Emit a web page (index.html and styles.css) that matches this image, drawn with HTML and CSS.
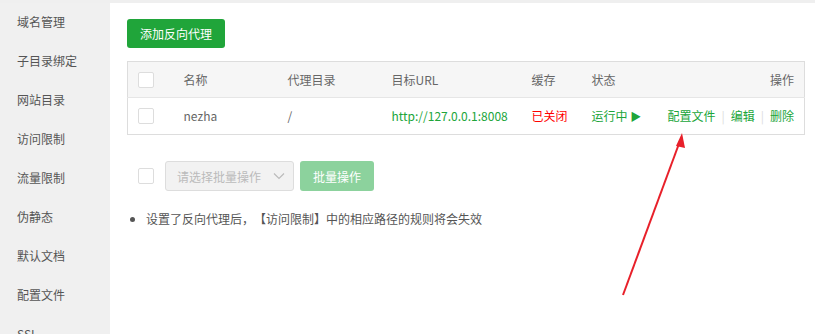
FILE: index.html
```html
<!DOCTYPE html>
<html lang="zh-CN">
<head>
   <meta charset="UTF-8">
   <title>反向代理</title>
   <link rel="stylesheet" href="styles.css">
</head>
<body>
    <div class="layout">
        <!-- 左侧菜单 -->
        <ul class="side-menu">
            <li>域名管理</li>
            <li>子目录绑定</li>
            <li>网站目录</li>
            <li>访问限制</li>
            <li>流量限制</li>
            <li>伪静态</li>
            <li>默认文档</li>
            <li>配置文件</li>
            <li>SSL</li>
        </ul>

        <div class="main">
            <button class="btn-green">添加反向代理</button>

            <table class="proxy-table">
                <colgroup>
                    <col class="c-check">
                    <col class="c-name">
                    <col class="c-dir">
                    <col class="c-url">
                    <col class="c-cache">
                    <col class="c-state">
                    <col>
                </colgroup>
                <thead>
                    <tr>
                        <th><span class="checkbox"></span></th>
                        <th>名称</th>
                        <th>代理目录</th>
                        <th>目标URL</th>
                        <th>缓存</th>
                        <th>状态</th>
                        <th class="right">操作</th>
                    </tr>
                </thead>
                <tbody>
                    <tr>
                        <td><span class="checkbox"></span></td>
                        <td>nezha</td>
                        <td>/</td>
                        <td class="green">http://127.0.0.1:8008</td>
                        <td class="red">已关闭</td>
                        <td class="green">运行中 <span class="play">&#9654;</span></td>
                        <td class="right ops">
                            <a href="#">配置文件</a><span class="sep">|</span><a href="#">编辑</a><span class="sep">|</span><a href="#">删除</a>
                        </td>
                    </tr>
                </tbody>
            </table>

            <div class="batch-bar">
                <span class="checkbox"></span>
                <div class="batch-select">
                    <span>请选择批量操作</span>
                    <svg width="12" height="8" viewBox="0 0 12 8"><path d="M1 1.5 L6 6.5 L11 1.5" fill="none" stroke="#bbb" stroke-width="1.2"/></svg>
                </div>
                <button class="btn-batch">批量操作</button>
            </div>

            <ul class="tips">
                <li>设置了反向代理后，【访问限制】中的相应路径的规则将会失效</li>
            </ul>
        </div>
    </div>

    <!-- 标注箭头 -->
    <svg class="arrow" width="815" height="334" viewBox="0 0 815 334">
        <line x1="623" y1="295" x2="680" y2="141" stroke="#e8202a" stroke-width="2"/>
        <polygon points="682,133 676,146 685,148" fill="#e8202a"/>
    </svg>
</body>
</html>
```

FILE: styles.css
```css
body {
    margin: 0;
    font-family: "Noto Sans CJK SC", "Open Sans", sans-serif;
    font-size: 12px;
    color: #666;
    background-color: #fff;
    overflow: hidden;
    text-spacing-trim: space-all;
}
.layout {
    display: flex;
    height: 334px;
    border-top: 3px solid #efefef;
    box-sizing: border-box;
    overflow: hidden;
}
.side-menu {
    list-style: none;
    margin: 0;
    padding: 0;
    width: 110px;
    flex-shrink: 0;
    background-color: #f0f0f0;
}
.side-menu li {
    height: 39px;
    line-height: 37px;
    padding-left: 17px;
    color: #555;
}
.main {
    flex: 1;
    padding: 16px 10px 0 17px;
}
.btn-green {
    display: block;
    height: 29px;
    padding: 0 13px 1px;
    border: none;
    border-radius: 3px;
    background-color: #20a53a;
    color: #fff;
    font-family: inherit;
    font-size: 12px;
}
.proxy-table {
    width: 678px;
    margin-top: 13px;
    border-collapse: collapse;
    table-layout: fixed;
    border: 1px solid #ddd;
}
.c-check { width: 46px; }
.c-name { width: 104px; }
.c-dir { width: 104px; }
.c-url { width: 140px; }
.c-cache { width: 60px; }
.c-state { width: 73px; }
.proxy-table th {
    height: 34px;
    background-color: #f6f6f6;
    font-weight: normal;
    text-align: left;
    padding: 0 10px 1px;
    border-bottom: 1px solid #e6e6e6;
    color: #666;
}
.proxy-table td {
    height: 34px;
    padding: 0 10px 2px;
    white-space: nowrap;
}
.proxy-table .right {
    text-align: right;
}
.checkbox {
    display: inline-block;
    width: 14px;
    height: 14px;
    border: 1px solid #ddd;
    border-radius: 2px;
    background-color: #fff;
    vertical-align: middle;
}
.green { color: #20a53a; }
.red { color: #f00; }
.play {
    font-size: 11px;
}
.ops a {
    color: #20a53a;
    text-decoration: none;
}
.ops .sep {
    color: #ddd;
    margin: 0 6px;
}
.batch-bar {
    display: flex;
    align-items: center;
    margin-top: 26px;
    padding-left: 11px;
}
.batch-select {
    display: flex;
    align-items: center;
    justify-content: space-between;
    box-sizing: border-box;
    width: 129px;
    height: 30px;
    margin-left: 11px;
    padding: 0 8px 0 11px;
    border: 1px solid #ddd;
    border-radius: 3px;
    background-color: #f2f2f2;
    color: #bbb;
}
.btn-batch {
    height: 30px;
    width: 74px;
    margin-left: 6px;
    border: none;
    border-radius: 3px;
    background-color: #8cd29d;
    color: #fff;
    font-family: inherit;
    font-size: 12px;
}
.tips {
    margin: 19px 0 0;
    padding-left: 19px;
    color: #555;
}
.arrow {
    position: absolute;
    left: 0;
    top: 0;
    pointer-events: none;
}
```
